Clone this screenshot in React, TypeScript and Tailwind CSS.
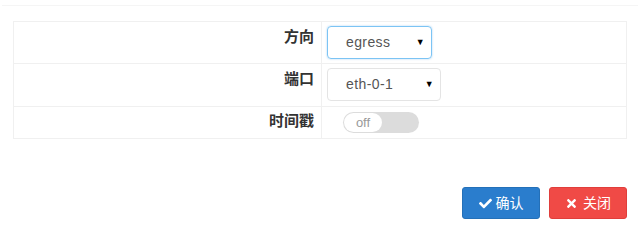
import { FaCheck, FaTimes } from "react-icons/fa";

const font = { fontFamily: '"Liberation Sans", "Noto Sans CJK SC", sans-serif' };

const FakeSelect = ({
  value,
  width,
  focused,
}: {
  value: string;
  width: string;
  focused?: boolean;
}) => (
  <div
    className={`flex h-[33px] items-center justify-between rounded-[4px] border pl-[18px] pr-[6px] text-[14px] tracking-[0.4px] text-[#555] ${width} ${
      focused
        ? "border-[#7cc4f4] shadow-[0_0_2px_rgba(102,175,233,0.6)]"
        : "border-[#e4e4e4]"
    }`}
  >
    <span>{value}</span>
    <span className="text-[9px] text-black">▼</span>
  </div>
);

export default function App() {
  return (
    <div className="h-[231px] w-[640px] bg-white" style={font}>
      <div className="mx-[2px] h-[6px] border-b border-[#f5f5f5]" />

      <div className="ml-[13px] mt-[15px] w-[614px] border border-[#f0f0f0]">
        <div className="flex h-[42px] border-b border-[#f0f0f0]">
          <div className="w-[308px] border-r border-[#f0f0f0] pr-[7px] pt-[4px] text-right text-[15px] font-bold text-[#333]">
            方向
          </div>
          <div className="pl-[5px] pt-[4px]">
            <FakeSelect value="egress" width="w-[105px]" focused />
          </div>
        </div>
        <div className="flex h-[43px] border-b border-[#f0f0f0]">
          <div className="w-[308px] border-r border-[#f0f0f0] pr-[7px] pt-[4px] text-right text-[15px] font-bold text-[#333]">
            端口
          </div>
          <div className="pl-[5px] pt-[4px]">
            <FakeSelect value="eth-0-1" width="w-[114px]" />
          </div>
        </div>
        <div className="flex h-[31px]">
          <div className="w-[308px] border-r border-[#f0f0f0] pr-[7px] pt-[3px] text-right text-[15px] font-bold text-[#333]">
            时间戳
          </div>
          <div className="pl-[21px] pt-[5px]">
            <div className="flex h-[21px] w-[76px] items-center rounded-full bg-[#dcdcdc] p-[1px]">
              <div className="flex h-[19px] w-[38px] items-center justify-center rounded-full bg-white text-[13px] text-[#999]">
                off
              </div>
            </div>
          </div>
        </div>
      </div>

      <div className="mr-[13px] mt-[48px] flex justify-end gap-[9px]">
        <button className="flex h-[32px] w-[78px] items-center justify-center gap-[4px] rounded-[3px] border border-[#2470b8] bg-[#2a7dcd] text-[14px] text-white">
          <FaCheck className="text-[13px]" />
          确认
        </button>
        <button className="flex h-[32px] w-[78px] items-center justify-center gap-[5px] rounded-[3px] border border-[#e03e3b] bg-[#f04a46] text-[14px] text-white">
          <FaTimes className="text-[13px]" />
          关闭
        </button>
      </div>
    </div>
  );
}
